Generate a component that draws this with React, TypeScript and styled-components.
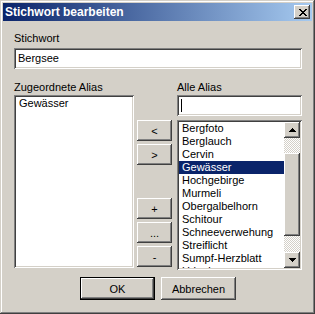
import styled, { createGlobalStyle, css } from 'styled-components';

const GlobalStyle = createGlobalStyle`
  html, body {
    margin: 0;
    padding: 0;
    background: #d4d0c8;
  }
  body {
    font-family: "Liberation Sans", Arial, sans-serif;
    font-size: 11px;
    color: #000;
  }
`;

const raised = css`
  background: #d4d0c8;
  box-shadow: inset -1px -1px #404040, inset 1px 1px #ffffff, inset -2px -2px #808080, inset 2px 2px #d4d0c8;
`;

const sunken = css`
  background: #ffffff;
  box-shadow: inset 1px 1px #808080, inset -1px -1px #ffffff, inset 2px 2px #404040, inset -2px -2px #d4d0c8;
`;

const aliases = [
  'Bergfoto',
  'Berglauch',
  'Cervin',
  'Gewässer',
  'Hochgebirge',
  'Murmeli',
  'Obergalbelhorn',
  'Schitour',
  'Schneeverwehung',
  'Streiflicht',
  'Sumpf-Herzblatt',
  'Urlaub',
];

const CloseGlyph = () => (
  <svg width="8" height="7" viewBox="0 0 8 7" shapeRendering="crispEdges">
    <path
      fill="#000"
      d="M0 0h2v1H0zM6 0h2v1H6zM1 1h2v1H1zM5 1h2v1H5zM2 2h4v1H2zM3 3h2v1H3zM2 4h4v1H2zM1 5h2v1H1zM5 5h2v1H5zM0 6h2v1H0zM6 6h2v1H6z"
    />
  </svg>
);

const Arrow = ({ down }: { down?: boolean }) => (
  <svg width="7" height="4" viewBox="0 0 7 4" shapeRendering="crispEdges">
    <path
      fill="#000"
      d={down ? 'M0 0h7v1H0zM1 1h5v1H1zM2 2h3v1H2zM3 3h1v1H3z' : 'M3 0h1v1H3zM2 1h3v1H2zM1 2h5v1H1zM0 3h7v1H0z'}
    />
  </svg>
);

const App = () => {
  return (
    <>
      <GlobalStyle />
      <Window>
        <TitleBar>
          <Title>Stichwort bearbeiten</Title>
          <CloseButton>
            <CloseGlyph />
          </CloseButton>
        </TitleBar>
        <Content>
          <Label>Stichwort</Label>
          <Field $top={3}>Bergsee</Field>
          <Columns>
            <LeftCol>
              <Label>Zugeordnete Alias</Label>
              <ListBox $height={173} $top={1}>
                <Items>
                  <Item>Gewässer</Item>
                </Items>
              </ListBox>
            </LeftCol>
            <MidCol>
              <ButtonGroup>
                <SmallButton>&lt;</SmallButton>
                <SmallButton>&gt;</SmallButton>
              </ButtonGroup>
              <ButtonGroup $bottom>
                <SmallButton>+</SmallButton>
                <SmallButton>...</SmallButton>
                <SmallButton>-</SmallButton>
              </ButtonGroup>
            </MidCol>
            <RightCol>
              <Label>Alle Alias</Label>
              <Field $top={1}>
                <Caret />
              </Field>
              <ListBox $height={150} $top={4}>
                <Items>
                  {aliases.map((a) => (
                    <Item key={a} $selected={a === 'Gewässer'}>
                      {a}
                    </Item>
                  ))}
                </Items>
                <ScrollBar>
                  <ScrollButton>
                    <Arrow />
                  </ScrollButton>
                  <Track $height={15} />
                  <Thumb />
                  <Track />
                  <ScrollButton>
                    <Arrow down />
                  </ScrollButton>
                </ScrollBar>
              </ListBox>
            </RightCol>
          </Columns>
          <Footer>
            <DefaultButton>
              <Button>OK</Button>
            </DefaultButton>
            <Button $width={75}>Abbrechen</Button>
          </Footer>
        </Content>
      </Window>
    </>
  );
};

const Window = styled.div`
  width: 315px;
  height: 314px;
  box-sizing: border-box;
  padding: 3px;
  background: #d4d0c8;
  box-shadow: inset -1px -1px #404040, inset 1px 1px #d4d0c8, inset -2px -2px #808080, inset 2px 2px #ffffff;
  display: flex;
  flex-direction: column;
`;

const TitleBar = styled.div`
  height: 18px;
  display: flex;
  align-items: center;
  justify-content: space-between;
  padding: 0 2px;
  background: linear-gradient(to right, #0a246a, #a6caf0);
`;

const Title = styled.span`
  color: #ffffff;
  font-weight: bold;
  font-size: 12px;
  line-height: 14px;
  white-space: nowrap;
`;

const CloseButton = styled.div`
  ${raised};
  width: 16px;
  height: 14px;
  display: flex;
  align-items: center;
  justify-content: center;
  padding-left: 1px;
  box-sizing: border-box;
`;

const Content = styled.div`
  flex: 1;
  display: flex;
  flex-direction: column;
  padding: 11px 10px 0 11px;
`;

const Label = styled.div`
  height: 13px;
  line-height: 13px;
  white-space: nowrap;
`;

const Field = styled.div<{ $top: number }>`
  ${sunken};
  height: 21px;
  margin-top: ${({ $top }) => $top}px;
  box-sizing: border-box;
  padding: 2px 4px;
  display: flex;
  align-items: center;
  line-height: 13px;
`;

const Caret = styled.span`
  width: 1px;
  height: 13px;
  background: #000;
`;

const Columns = styled.div`
  display: flex;
  margin-top: 12px;
`;

const LeftCol = styled.div`
  width: 120px;
  display: flex;
  flex-direction: column;
`;

const MidCol = styled.div`
  width: 35px;
  margin-left: 3px;
  padding: 39px 0 3px;
  display: flex;
  flex-direction: column;
`;

const RightCol = styled.div`
  width: 125px;
  margin-left: 5px;
  display: flex;
  flex-direction: column;
`;

const ButtonGroup = styled.div<{ $bottom?: boolean }>`
  display: flex;
  flex-direction: column;
  gap: 3px;
  margin-top: ${({ $bottom }) => ($bottom ? 'auto' : '0')};
`;

const SmallButton = styled.div`
  ${raised};
  height: 21px;
  display: flex;
  align-items: center;
  justify-content: center;
`;

const ListBox = styled.div<{ $height: number; $top: number }>`
  ${sunken};
  height: ${({ $height }) => $height}px;
  margin-top: ${({ $top }) => $top}px;
  box-sizing: border-box;
  padding: 2px;
  display: flex;
  overflow: hidden;
`;

const Items = styled.div`
  flex: 1;
  min-width: 0;
  overflow: hidden;
`;

const Item = styled.div<{ $selected?: boolean }>`
  height: 13px;
  line-height: 13px;
  padding-left: 3px;
  white-space: nowrap;
  background: ${({ $selected }) => ($selected ? '#0a246a' : 'transparent')};
  color: ${({ $selected }) => ($selected ? '#ffffff' : '#000000')};
`;

const ScrollBar = styled.div`
  width: 16px;
  display: flex;
  flex-direction: column;
`;

const ScrollButton = styled.div`
  ${raised};
  height: 16px;
  display: flex;
  align-items: center;
  justify-content: center;
`;

const Track = styled.div<{ $height?: number }>`
  ${({ $height }) => ($height ? `height: ${$height}px;` : 'flex: 1;')}
  background: repeating-conic-gradient(#ffffff 0% 25%, #d4d0c8 0% 50%) 0 0 / 2px 2px;
`;

const Thumb = styled.div`
  ${raised};
  height: 83px;
`;

const Footer = styled.div`
  display: flex;
  justify-content: center;
  gap: 6px;
  margin-top: 7px;
`;

const DefaultButton = styled.div`
  border: 1px solid #000;
  width: 75px;
  height: 23px;
  box-sizing: border-box;
  display: flex;
`;

const Button = styled.div<{ $width?: number }>`
  ${raised};
  ${({ $width }) => ($width ? `width: ${$width}px;` : 'flex: 1;')}
  height: ${({ $width }) => ($width ? '23px' : 'auto')};
  display: flex;
  align-items: center;
  justify-content: center;
`;

export default App;
